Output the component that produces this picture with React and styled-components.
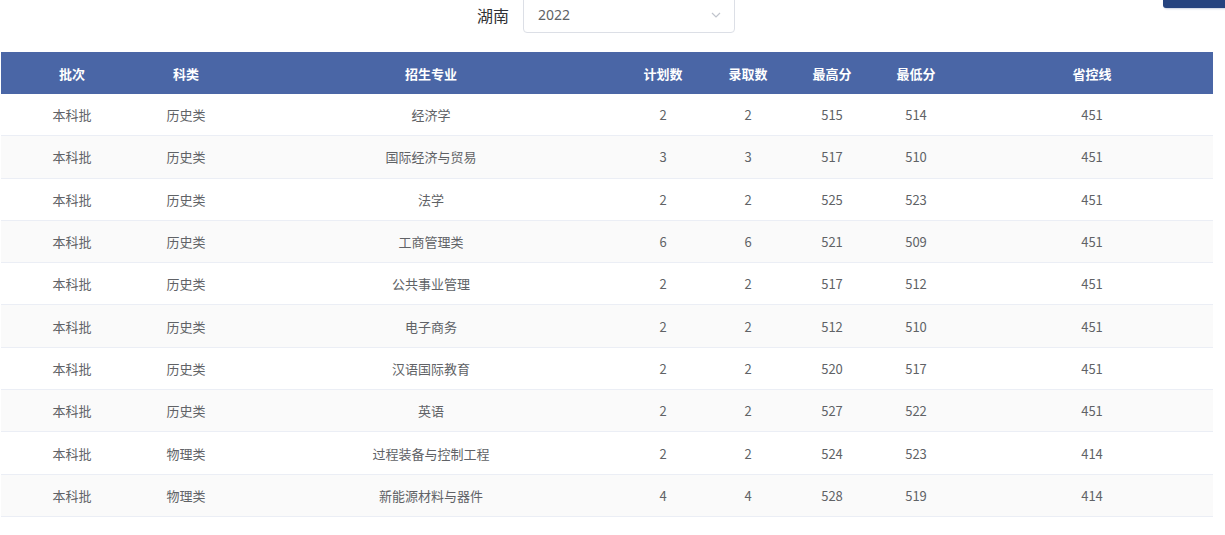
import React from "react";
import styled, { createGlobalStyle } from "styled-components";

const G = createGlobalStyle`
  body{margin:0;background:#fff;font-family:"Noto Sans CJK SC","Noto Sans",sans-serif;}
`;
const Page = styled.div`position:relative;width:1225px;height:535px;overflow:hidden;`;
const TopBtn = styled.div`position:absolute;right:0;top:0;width:62px;height:8px;background:#25437f;border-radius:0 0 0 3px;box-shadow:1px 1px 2px #c8d0e0;`;
const Filter = styled.div`display:flex;align-items:center;height:35px;margin-top:-3px;padding-left:477px;gap:14px;`;
const Label = styled.span`font-size:16px;color:#303133;`;
const Select = styled.div`width:212px;height:37px;box-sizing:border-box;border:1px solid #dcdfe6;border-radius:4px;display:flex;align-items:center;justify-content:space-between;padding:0 12px 0 14px;font-size:14px;color:#606266;font-family:"Noto Sans",sans-serif;`;
const cols = "142px 86px 404px 60px 110px 58px 110px 242px";
const Table = styled.div`margin:20px 0 0 1px;width:1212px;`;
const Head = styled.div`display:grid;grid-template-columns:${cols};height:42px;background:#4a66a6;align-items:center;`;
const Row = styled.div`display:grid;grid-template-columns:${cols};height:42.3px;box-sizing:border-box;border-bottom:1px solid #ebeef5;align-items:center;background:${p=>p.$alt?"#fafafa":"#fff"};`;
const H = styled.div`text-align:center;color:#fff;font-size:13px;font-weight:700;`;
const C = styled.div`text-align:center;color:#606266;font-size:13px;`;

const data = [
["本科批","历史类","经济学",2,2,515,514,451],
["本科批","历史类","国际经济与贸易",3,3,517,510,451],
["本科批","历史类","法学",2,2,525,523,451],
["本科批","历史类","工商管理类",6,6,521,509,451],
["本科批","历史类","公共事业管理",2,2,517,512,451],
["本科批","历史类","电子商务",2,2,512,510,451],
["本科批","历史类","汉语国际教育",2,2,520,517,451],
["本科批","历史类","英语",2,2,527,522,451],
["本科批","物理类","过程装备与控制工程",2,2,524,523,414],
["本科批","物理类","新能源材料与器件",4,4,528,519,414],
];
const heads=["批次","科类","招生专业","计划数","录取数","最高分","最低分","省控线"];

export default function App(){
  return <Page><G/><TopBtn/>
    <Filter><Label>湖南</Label>
      <Select><span>2022</span>
        <svg width="12" height="12" viewBox="0 0 12 12"><path d="M2 4l4 4 4-4" fill="none" stroke="#c0c4cc" strokeWidth="1.2"/></svg>
      </Select>
    </Filter>
    <Table>
      <Head>{heads.map(h=><H key={h}>{h}</H>)}</Head>
      {data.map((r,i)=><Row key={i} $alt={i%2===1}>{r.map((c,j)=><C key={j}>{c}</C>)}</Row>)}
    </Table>
  </Page>;
}
